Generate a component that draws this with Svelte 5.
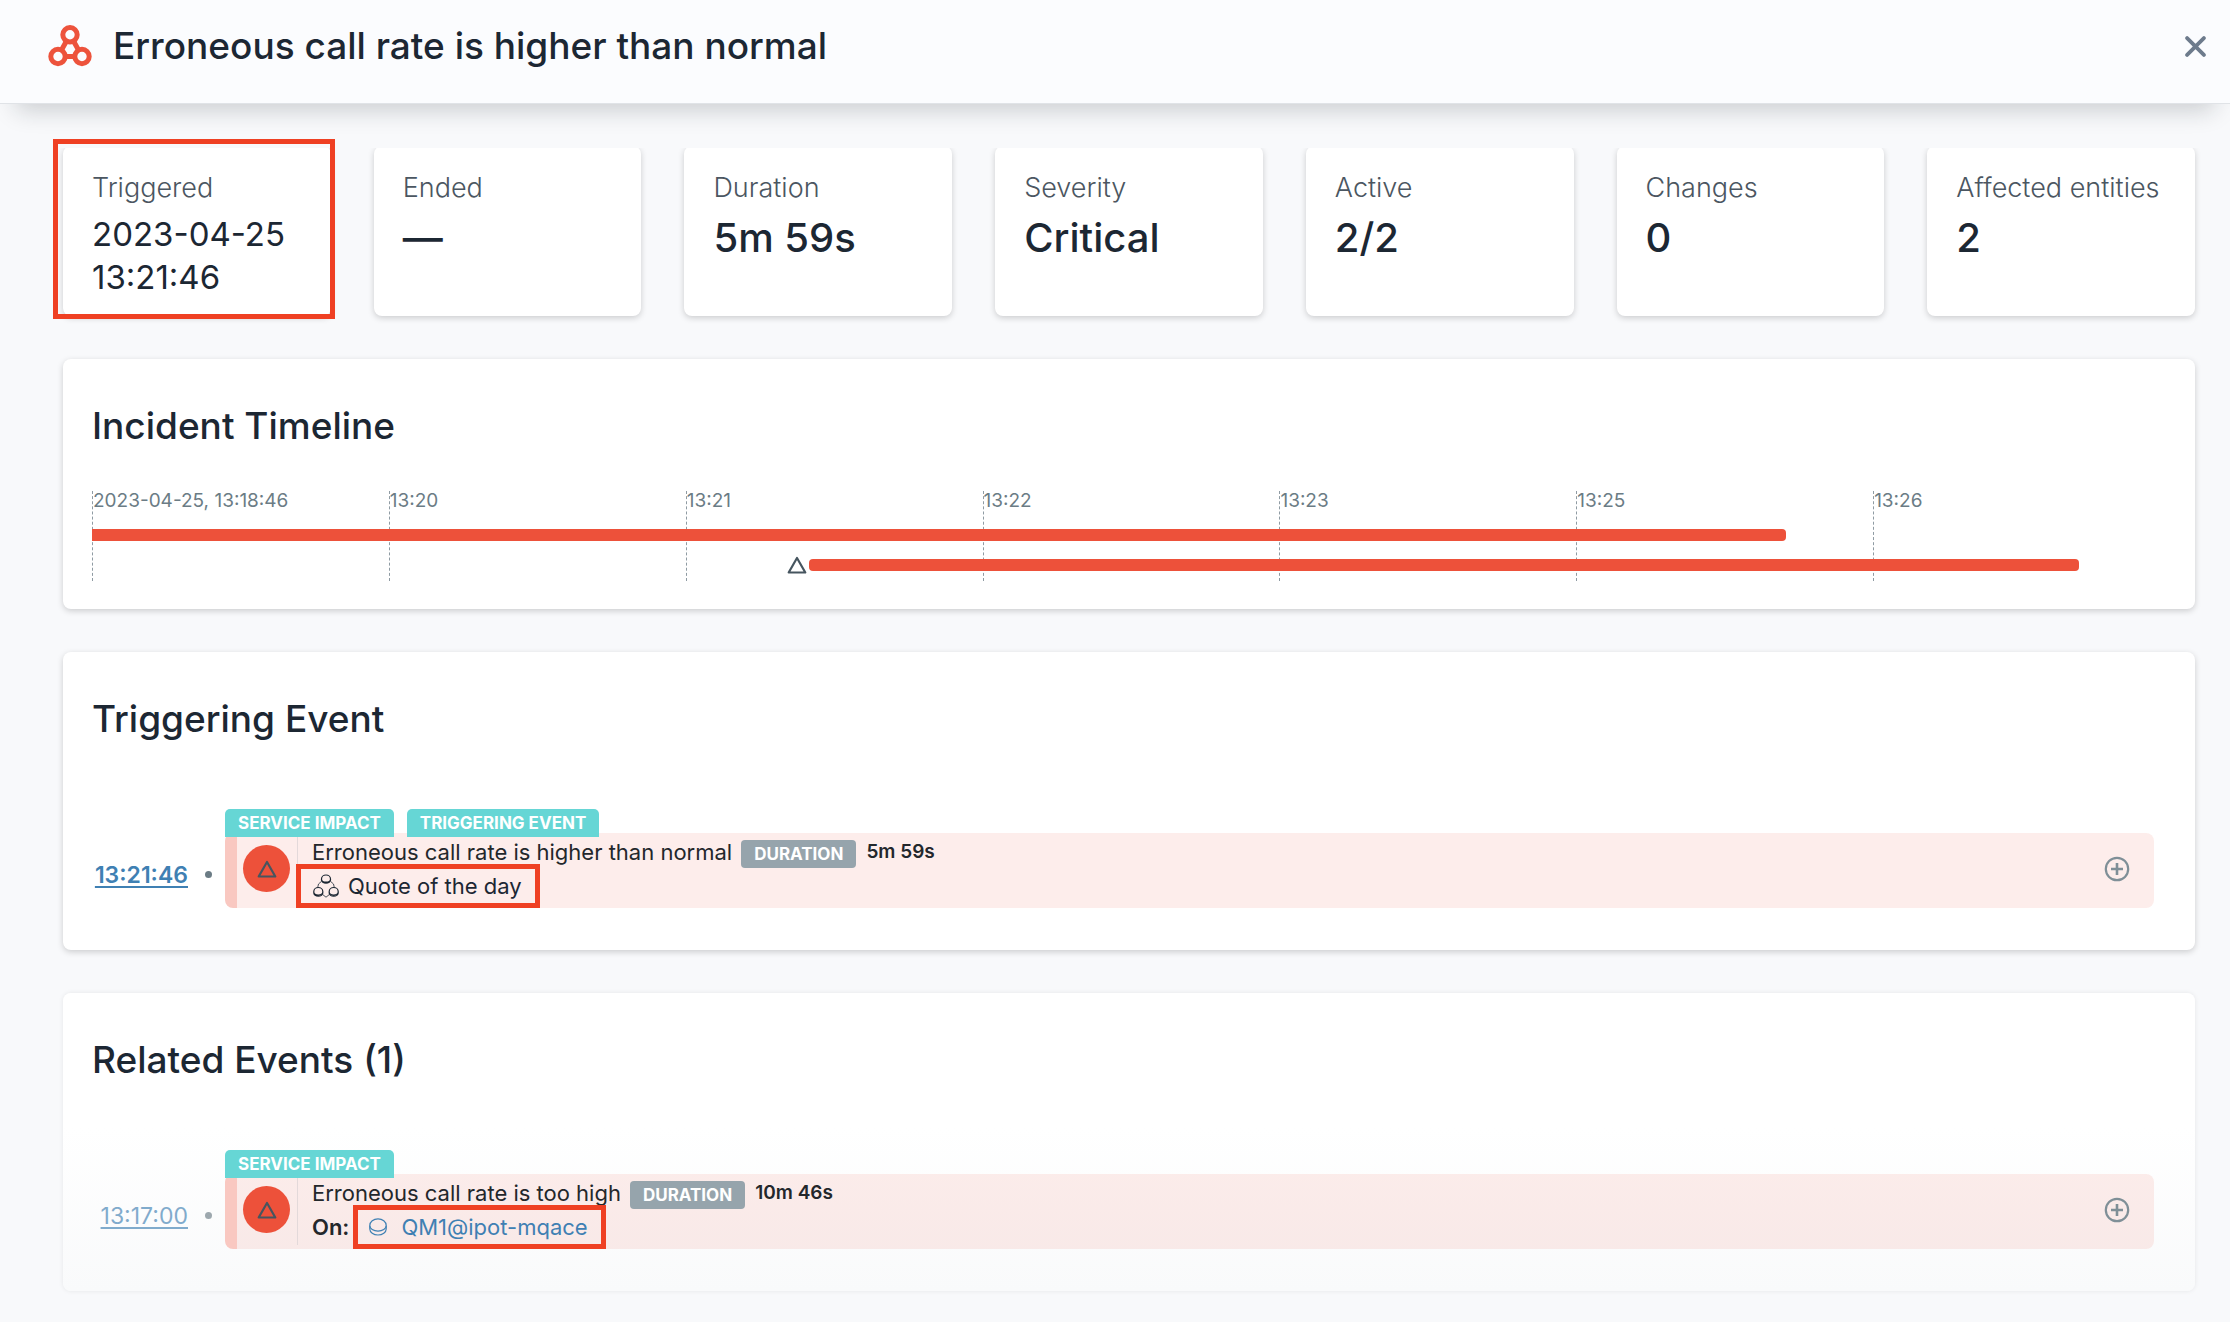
<script>
  const stats = [
    { label: 'Triggered', value: '2023-04-25 13:21:46', long: true, marked: true },
    { label: 'Ended', value: '—' },
    { label: 'Duration', value: '5m 59s' },
    { label: 'Severity', value: 'Critical' },
    { label: 'Active', value: '2/2' },
    { label: 'Changes', value: '0' },
    { label: 'Affected entities', value: '2' },
  ];

  const ticks = ['2023-04-25, 13:18:46', '13:20', '13:21', '13:22', '13:23', '13:25', '13:26'];

  const bars = [
    { start: 0, width: 81.5, marker: false },
    { start: 34.5, width: 61.1, marker: true },
  ];

  const sections = [
    {
      title: 'Triggering Event',
      faded: false,
      event: {
        time: '13:21:46',
        current: true,
        tags: ['Service impact', 'Triggering event'],
        text: 'Erroneous call rate is higher than normal',
        duration: '5m 59s',
        entity: 'Quote of the day',
        kind: 'application',
      },
    },
    {
      title: 'Related Events (1)',
      faded: true,
      event: {
        time: '13:17:00',
        current: false,
        tags: ['Service impact'],
        text: 'Erroneous call rate is too high',
        duration: '10m 46s',
        entity: 'QM1@ipot-mqace',
        kind: 'service',
      },
    },
  ];
</script>

{#snippet triangle()}
  <svg class="triangle" viewBox="0 0 20 18" aria-hidden="true">
    <path d="M10 2 L18.3 16.5 H1.7 Z" fill="none" stroke="currentColor" stroke-width="2.2" stroke-linejoin="round" />
  </svg>
{/snippet}

<header class="top">
  <svg class="logo" viewBox="0 0 44 42" aria-hidden="true">
    <g fill="none" stroke="currentColor">
      <circle cx="22" cy="9.8" r="7.2" stroke-width="5" />
      <circle cx="10" cy="31.5" r="7.2" stroke-width="5" />
      <circle cx="34" cy="31.5" r="7.2" stroke-width="5" />
      <path d="M18.5 16 L13.5 25 M25.5 16 L30.5 25 M17 31.5 H27" stroke-width="5" />
    </g>
  </svg>
  <h1>Erroneous call rate is higher than normal</h1>
  <button class="close" aria-label="Close">
    <svg viewBox="0 0 20 20" aria-hidden="true">
      <path d="M2 2 L18 18 M18 2 L2 18" stroke="currentColor" stroke-width="3.6" stroke-linecap="round" />
    </svg>
  </button>
</header>

<main>
  <div class="stats">
    {#each stats as stat}
      <div class="stat" class:marked={stat.marked}>
        <div class="card">
          <div class="label">{stat.label}</div>
          <div class="value" class:long={stat.long}>{stat.value}</div>
        </div>
      </div>
    {/each}
  </div>

  <section class="panel">
    <h2>Incident Timeline</h2>
    <div class="timeline">
      <div class="ticks">
        {#each ticks as tick}
          <span>{tick}</span>
        {/each}
      </div>
      <div class="bars">
        {#each bars as bar}
          <div class="bar" class:begins={bar.marker} style="margin-left: {bar.start}%; width: {bar.width}%">
            {#if bar.marker}{@render triangle()}{/if}
          </div>
        {/each}
      </div>
    </div>
  </section>

  {#each sections as section}
    {@const event = section.event}
    <section class="panel" class:faded={section.faded}>
      <h2>{section.title}</h2>
      <div class="event">
        <div class="when" class:current={event.current}>
          <a href="#event">{event.time}</a>
          <i></i>
        </div>
        <div class="body">
          <div class="tags">
            {#each event.tags as tag}
              <span>{tag}</span>
            {/each}
          </div>
          <div class="row">
            <div class="badge">{@render triangle()}</div>
            <div class="details">
              <div class="line">
                <span class="text">{event.text}</span>
                <span class="pill">Duration</span>
                <b class="duration">{event.duration}</b>
              </div>
              {#if event.kind === 'application'}
                <div class="line">
                  <span class="entity mark app">
                    <svg class="app-icon" viewBox="0 0 26 24" aria-hidden="true">
                      <g fill="none" stroke="currentColor" stroke-width="1.2">
                        <path d="M8.5 5 a4.5 4 0 0 1 9 0 v1 a4.5 3.2 0 0 1 -9 0 Z M8.5 5.2 a4.5 3 0 0 0 9 0" />
                        <path d="M0.8 17.5 a4.5 4 0 0 1 9 0 v1.5 a4.5 3.2 0 0 1 -9 0 Z M0.8 18 a4.5 3 0 0 0 9 0" />
                        <path d="M16.2 17.5 a4.5 4 0 0 1 9 0 v1.5 a4.5 3.2 0 0 1 -9 0 Z M16.2 18 a4.5 3 0 0 0 9 0" />
                        <path d="M8.3 7.5 Q4.5 9.5 4.7 13.5 M17.7 7.5 Q21.5 9.5 21.3 13.5 M10 20.8 L13 23.2 L16 20.8" stroke-width="0.8" />
                      </g>
                    </svg>
                    {event.entity}
                  </span>
                </div>
              {:else}
                <div class="line">
                  <b class="on">On:</b>
                  <a class="entity mark" href="#entity">
                    <svg class="service-icon" viewBox="0 0 18 18" aria-hidden="true">
                      <g fill="none" stroke="currentColor" stroke-width="1.2">
                        <path d="M0.8 7.5 a8.2 6.6 0 0 1 16.4 0 v3.5 a8.2 6 0 0 1 -16.4 0 Z" />
                        <path d="M0.8 7.8 a8.2 5.4 0 0 0 16.4 0" />
                      </g>
                    </svg>
                    {event.entity}
                  </a>
                </div>
              {/if}
            </div>
            <button class="expand" aria-label="Expand event">
              <svg viewBox="0 0 26 26" aria-hidden="true">
                <g fill="none" stroke="currentColor" stroke-width="2.2">
                  <circle cx="13" cy="13" r="11.2" />
                  <path d="M13 7 V19 M7 13 H19" stroke-width="2.6" />
                </g>
              </svg>
            </button>
          </div>
        </div>
      </div>
    </section>
  {/each}
</main>

<style>
  :global(body) {
    background: #f8f9fb;
    color: #1c2733;
    font-family: Inter, 'Liberation Sans', sans-serif;
  }

  h1,
  h2 {
    margin: 0;
    font-size: 37px;
    font-weight: 500;
    line-height: 48px;
  }

  button {
    display: flex;
    padding: 0;
    border: 0;
    background: none;
    cursor: pointer;
  }

  svg {
    display: block;
    flex: none;
  }

  .top {
    display: flex;
    align-items: center;
    padding: 22px 24px 33px 48px;
    border-bottom: 1px solid #e0e3e7;
    background: #fbfcfe;
    box-shadow: 0 22px 24px -16px rgba(20, 28, 36, 0.2);
  }

  .logo {
    width: 44px;
    height: 42px;
    margin-right: 21px;
    color: #ed533c;
  }

  .close {
    margin-left: auto;
    color: #6d7b8c;
  }

  .close svg {
    width: 21px;
    height: 21px;
  }

  main {
    display: flex;
    flex-direction: column;
    gap: 43px;
    padding: 42px 35px 27px 63px;
  }

  .stats {
    display: grid;
    grid-template-columns: repeat(7, 1fr);
    gap: 43px;
  }

  .stat {
    position: relative;
    display: grid;
  }

  /* The outline marks the field to look at. */
  .stat.marked::after {
    content: '';
    position: absolute;
    inset: -7px -4px -3px -10px;
    border: 5px solid #ef4023;
  }

  .card {
    box-sizing: border-box;
    min-height: 170px;
    padding: 24px 0 12px 29px;
    border-radius: 8px;
    background: #fff;
    box-shadow: 0 2px 6px rgba(0, 0, 0, 0.18);
    clip-path: inset(2px -12px -12px);
  }

  .label {
    color: #4b5661;
    font-size: 27px;
    font-weight: 300;
    line-height: 36px;
    white-space: nowrap;
  }

  .value {
    margin-top: 7px;
    font-size: 40px;
    font-weight: 500;
    line-height: 50px;
  }

  .value.long {
    padding-right: 36px;
    font-size: 33px;
    font-weight: 400;
    line-height: 43px;
  }

  .panel {
    padding: 43px 25px 28px 29px;
    border-radius: 8px;
    background: #fff;
    box-shadow: 0 2px 6px rgba(0, 0, 0, 0.18);
  }

  .panel.faded {
    background: linear-gradient(#fff 45%, #f9fafb);
    box-shadow: 0 0 5px rgba(0, 0, 0, 0.08);
  }

  .timeline {
    display: grid;
    margin-top: 41px;
  }

  .ticks,
  .bars {
    grid-area: 1 / 1;
  }

  .ticks {
    display: grid;
    grid-template-columns: repeat(7, 1fr);
    height: 90px;
  }

  .ticks span {
    border-left: 1px dashed #8f9ba3;
    color: #6b7c85;
    font-size: 19px;
    line-height: 20px;
    white-space: nowrap;
  }

  .bars {
    display: flex;
    flex-direction: column;
    gap: 18px;
    padding-top: 38px;
  }

  .bar {
    position: relative;
    height: 12px;
    border-radius: 0 4px 4px 0;
    background: #ed513a;
  }

  .bar.begins {
    border-radius: 4px;
  }

  .triangle {
    width: 20px;
    height: 18px;
    color: #46555f;
  }

  .bar .triangle {
    position: absolute;
    right: 100%;
    top: -3px;
    margin-right: 2px;
  }

  .event {
    display: grid;
    grid-template-columns: 133px 1fr;
    padding: 66px 16px 14px 0;
  }

  .when {
    display: flex;
    align-items: center;
    justify-content: flex-end;
    gap: 17px;
    padding: 32px 13px 0 0;
    opacity: 0.65;
  }

  .when a {
    color: #3f80b3;
    font-size: 23px;
    text-decoration-thickness: 2px;
    text-underline-offset: 3px;
  }

  .when.current {
    opacity: 1;
  }

  .when.current a {
    font-weight: 600;
  }

  .when i {
    width: 7px;
    height: 7px;
    border-radius: 50%;
    background: #6b7c85;
  }

  .tags {
    position: relative;
    z-index: 1;
    display: flex;
    gap: 13px;
    margin-bottom: -4px;
  }

  .tags span,
  .pill {
    padding: 0 13px;
    border-radius: 5px 5px 0 0;
    background: #66d6d5;
    color: #fff;
    font-size: 17px;
    font-weight: 700;
    line-height: 28px;
    text-transform: uppercase;
    white-space: nowrap;
  }

  .pill {
    margin: 4px 10px 0 9px;
    border-radius: 4px;
    background: #96a4ac;
  }

  .row {
    display: flex;
    box-sizing: border-box;
    min-height: 75px;
    padding: 0 24px 4px 6px;
    border-left: 12px solid #f9c8c1;
    border-radius: 8px;
    background: rgba(236, 80, 56, 0.1);
    background-clip: padding-box;
  }

  .badge {
    display: flex;
    align-items: center;
    justify-content: center;
    align-self: center;
    width: 47px;
    height: 47px;
    margin-right: 7px;
    border-radius: 50%;
    background: #ed513a;
  }

  .details {
    flex: 1;
    padding: 2px 0 0 14px;
    border-left: 1px solid #e3d9da;
  }

  .line {
    display: flex;
    align-items: center;
    height: 34px;
    color: #23272b;
    font-size: 22px;
    line-height: 26px;
  }

  .duration {
    font-size: 19px;
    font-weight: 600;
  }

  .on {
    margin-right: 20px;
    font-weight: 600;
  }

  .entity {
    position: relative;
    display: flex;
    align-items: center;
    gap: 14px;
    color: #3f80b3;
    text-decoration: none;
  }

  .entity.app {
    gap: 9px;
    padding-left: 1px;
    color: #1c2733;
  }

  .mark::after {
    content: '';
    position: absolute;
    inset: -9px -18px -9px -16px;
    border: 5px solid #ef4023;
  }

  .app-icon {
    width: 26px;
    height: 24px;
  }

  .service-icon {
    width: 18px;
    height: 18px;
  }

  .expand {
    align-self: center;
    color: #7f8f97;
  }

  .expand svg {
    width: 26px;
    height: 26px;
  }
</style>
